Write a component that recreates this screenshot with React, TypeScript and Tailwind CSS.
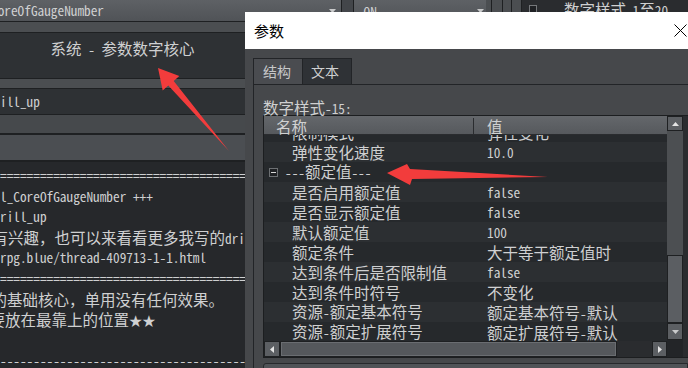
import React from 'react';

// CJK runs get the wide CJK face, everything else the narrow mono face
const CJK_RE = /([\u3000-\u9fff\uff00-\uffef]+)/;
const lat = "font-['Noto_Sans_Mono_CJK_SC','DejaVu_Sans_Mono',monospace] text-[13.3px]";
const cjk = "font-['Noto_Sans_CJK_SC',sans-serif] text-[15.5px]";

const Mix = ({ t }: { t: string }) => (
  <>
    {t.split(CJK_RE).map((s, i) =>
      s === '' ? null : (
        <span key={i} className={i % 2 ? cjk : lat}>
          {s}
        </span>
      )
    )}
  </>
);

const Line = ({ t, off = '' }: { t: string; off?: string }) => (
  <div className={`h-[20.6px] leading-[20.6px] whitespace-pre overflow-hidden ${off}`}>
    <Mix t={t} />
  </div>
);

const Down = () => (
  <svg width="7" height="4" viewBox="0 0 7 4">
    <path d="M0 0h7L3.5 4z" fill="#c9cacb" />
  </svg>
);

const rows: { name: string; value: string; group?: boolean }[] = [
  { name: '限制模式', value: '弹性变化' },
  { name: '弹性变化速度', value: '10.0' },
  { name: '---额定值---', value: '', group: true },
  { name: '是否启用额定值', value: 'false' },
  { name: '是否显示额定值', value: 'false' },
  { name: '默认额定值', value: '100' },
  { name: '额定条件', value: '大于等于额定值时' },
  { name: '达到条件后是否限制值', value: 'false' },
  { name: '达到条件时符号', value: '不变化' },
  { name: '资源-额定基本符号', value: '额定基本符号-默认' },
  { name: '资源-额定扩展符号', value: '额定扩展符号-默认' },
];

export default function App() {
  return (
    <div className="relative w-[688px] h-[368px] overflow-hidden bg-[#26282b] text-[#cfd0d1]">
      {/* top combo bar of the plugin manager */}
      <div className="flex h-[22px]">
        <div className="flex w-[345px] items-center overflow-hidden bg-gradient-to-b from-[#5e6165] to-[#505357] border-b border-[#1e2022] leading-[21px]">
          <div className="-ml-[9px] whitespace-pre">
            <Mix t="CoreOfGaugeNumber" />
          </div>
          <div className="ml-auto mr-[5px] flex">
            <Down />
          </div>
        </div>
        <div className="w-[13px] border-x border-[#1e2022] bg-[#43464a]" />
        <div className="flex w-[134px] items-center bg-gradient-to-b from-[#5e6165] to-[#505357] pl-[10px] leading-[21px]">
          <Mix t="ON" />
          <div className="ml-auto mr-[2px] flex">
            <Down />
          </div>
        </div>
        <div className="flex w-[36px] bg-[#4b4e51]">
          <div className="ml-[5px] w-px bg-[#1e2022]" />
          <div className="ml-[10px] w-px bg-[#1e2022]" />
          <div className="ml-[9px] w-px bg-[#1e2022]" />
          <div className="ml-[9px] w-px bg-[#1e2022]" />
        </div>
        <div className="flex flex-1 items-start bg-[#2a2c2f] pl-[7px] leading-[18px]">
          <div className="mt-[5px] h-[8px] w-[8px] border border-[#75787b] bg-[#1f2124]" />
          <div className="ml-[7px] whitespace-pre">
            <Mix t="---数字样式 1至20---" />
          </div>
        </div>
      </div>

      {/* left plugin detail column */}
      <div className="flex w-[245px] flex-col">
        <div className="h-[10px] bg-[#4b4e51]" />
        <div className="h-[47px] border-y border-[#1e2022] bg-[#2e3134] pt-[5px] text-center">
          <Line t="系统 - 参数数字核心" />
        </div>
        <div className="h-[9px] bg-[#4b4e51]" />
        <div className="flex h-[27px] items-center border-y border-[#1e2022] bg-[#2e3134]">
          <Line t="ill_up" />
        </div>
        <div className="h-[20px] border-b-2 border-[#1e2022] bg-[#46494c]" />
        <div className="h-[27px] border-b-2 border-[#1e2022] bg-[#4b4e52]" />
        <div className="pt-[3px]">
          <Line t={'='.repeat(40)} />
          <Line t="l_CoreOfGaugeNumber +++" />
          <Line t="rill_up" />
          <Line t="有兴趣，也可以来看看更多我写的drill" off="indent-[-7.5px]" />
          <Line t="rpg.blue/thread-409713-1-1.html" />
          <Line t={'='.repeat(40)} />
          <Line t="的基础核心，单用没有任何效果。" off="indent-[-8.5px]" />
          <Line t="要放在最靠上的位置★★" off="indent-[-10.5px]" />
          <Line t=" " />
          <Line t={'-'.repeat(40)} />
        </div>
      </div>

      {/* parameter dialog */}
      <div className="absolute left-[245px] top-[12px] flex h-[380px] w-[443px] flex-col bg-[#46484b]">
        <div className="flex h-[37px] shrink-0 items-center bg-white pl-[9px]">
          <span className="font-['Noto_Sans_CJK_SC',sans-serif] text-[15px] leading-[20px] text-black">参数</span>
          <svg className="ml-auto mr-[1px]" width="13" height="13" viewBox="0 0 13 13">
            <path d="M0.5 0.5l12 12M12.5 0.5l-12 12" stroke="#000" strokeWidth="1" />
          </svg>
        </div>
        <div className="pl-[8px] pt-[9px]">
          <div className="flex h-[26px] font-['Noto_Sans_CJK_SC',sans-serif] text-[14px]">
            <div className="flex w-[50px] items-center border-x border-t border-[#222427] bg-[#4a4c50] pl-[9px] text-[#c6c7c8]">
              结构
            </div>
            <div className="flex w-[49px] items-center border-r border-t border-[#222427] bg-[#2f3236] pl-[8px] text-[#cfd0d1]">
              文本
            </div>
          </div>
          <div className="border-l border-t border-[#222427] pl-[9px] pt-[14px]">
            <div className="h-[16px] leading-[16px] whitespace-pre">
              <Mix t="数字样式-15:" />
            </div>
            <div className="flex h-[243px] border-y border-l border-[#1c1e20]">
              <div className="flex w-[403px] flex-col">
                <div className="flex h-[19px] shrink-0 border-b border-[#2a2c2f] bg-gradient-to-b from-[#64676b] to-[#56595d] pt-[2px] leading-[17px] text-[#d0d1d2]">
                  <div className="w-[210px] border-r border-[#2a2c2f] pl-[12px]">
                    <Mix t="名称" />
                  </div>
                  <div className="pl-[13px]">
                    <Mix t="值" />
                  </div>
                </div>
                <div className="h-[206px] overflow-hidden">
                  <div className="-mt-[13px]">
                    {rows.map((r, i) => (
                      <div
                        key={i}
                        className={`flex h-[20px] leading-[20px] whitespace-pre ${i % 2 ? 'bg-[#2c2f32]' : 'bg-[#26292c]'}`}
                      >
                        <div className="flex w-[210px] items-center">
                          {r.group ? (
                            <>
                              <div className="ml-[5px] flex h-[9px] w-[9px] items-center justify-center border border-[#6d7073] bg-[#1f2124]">
                                <div className="h-px w-[5px] bg-[#d8d8d8]" />
                              </div>
                              <div className="ml-[7px]">
                                <Mix t={r.name} />
                              </div>
                            </>
                          ) : (
                            <div className="pl-[28px]">
                              <Mix t={r.name} />
                            </div>
                          )}
                        </div>
                        <div className="pl-[13px]">
                          <Mix t={r.value} />
                        </div>
                      </div>
                    ))}
                  </div>
                </div>
                <div className="flex h-[16px] bg-[#2a2c2f]">
                  <div className="flex w-[16px] items-center justify-center border border-[#1e2022] bg-[#5c5f63]">
                    <svg width="4" height="7" viewBox="0 0 4 7">
                      <path d="M4 0v7L0 3.5z" fill="#e4e4e4" />
                    </svg>
                  </div>
                  <div className="w-[337px] border border-[#1e2022] bg-[#55585c] shadow-[inset_0_0_0_1px_#6a6d71]" />
                  <div className="flex-1" />
                  <div className="flex w-[15px] items-center justify-center border border-[#1e2022] bg-[#5c5f63]">
                    <svg width="4" height="7" viewBox="0 0 4 7">
                      <path d="M0 0v7L4 3.5z" fill="#e4e4e4" />
                    </svg>
                  </div>
                </div>
              </div>
              <div className="flex w-[16px] flex-col bg-[#4c4f52]">
                <div className="flex h-[15px] items-center justify-center border border-[#1e2022] bg-[#5c5f63]">
                  <svg width="7" height="4" viewBox="0 0 7 4">
                    <path d="M0 4h7L3.5 0z" fill="#e4e4e4" />
                  </svg>
                </div>
                <div className="h-[124px]" />
                <div className="h-[68px] border border-[#1e2022] bg-[#5b5e62]" />
                <div className="flex h-[17px] items-center justify-center border border-[#1e2022] bg-[#5c5f63]">
                  <Down />
                </div>
                <div className="flex-1 bg-[#232528]" />
              </div>
              <div className="flex-1 bg-[#2a2c2f]" />
            </div>
            <div className="mt-[5px] h-[20px] rounded-tl-[3px] border border-[#27292c] bg-[#505357]" />
          </div>
        </div>
      </div>

      {/* red annotation arrows */}
      <svg className="pointer-events-none absolute inset-0" width="688" height="368" viewBox="0 0 688 368">
        <polygon points="158,68 179.3,76.1 173.7,80.9 229,151 168.3,85.5 162.7,90.4" fill="#f23c3c" />
        <polygon points="387,173 407,164 410,169 548,177 412,179 410,185" fill="#f23c3c" />
      </svg>
    </div>
  );
}
